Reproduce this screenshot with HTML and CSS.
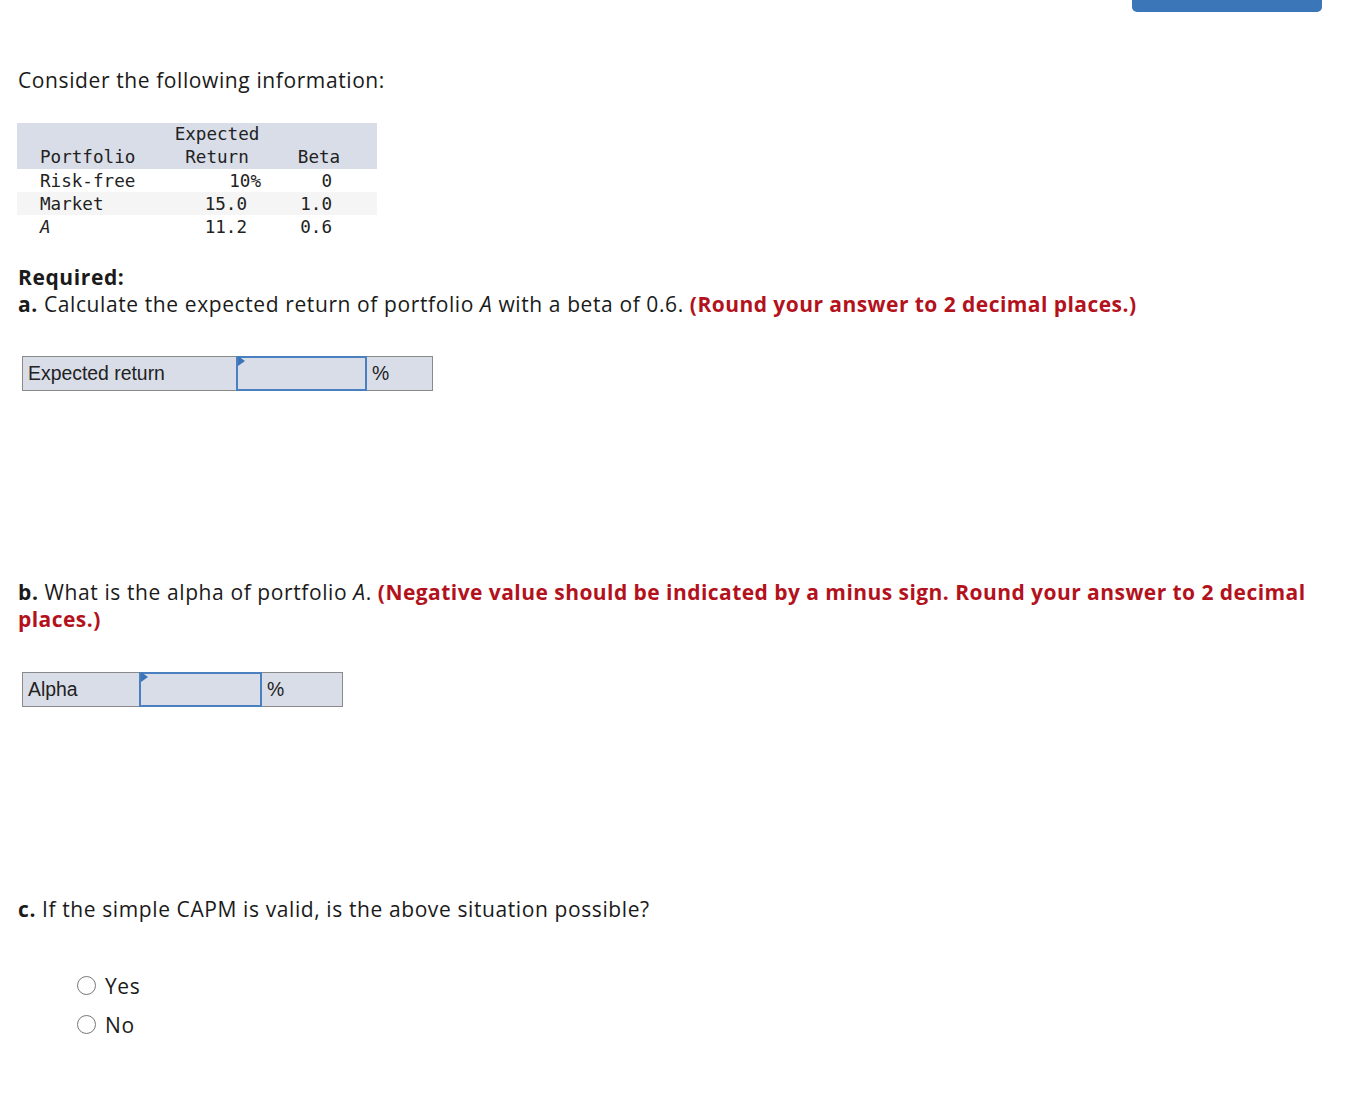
FILE: index.html
```html
<!DOCTYPE html>
<html>
<head>
<meta charset="utf-8">
<link rel="stylesheet" href="styles.css">
</head>
<body>
<div class="topbar"><div class="topbtn"></div></div>
<main class="content">
  <p class="intro">Consider the following information:</p>
  <table class="data">
    <thead>
      <tr>
        <th class="c1"><br>Portfolio</th>
        <th class="c2">Expected<br>Return</th>
        <th class="c3"><br>Beta</th>
      </tr>
    </thead>
    <tbody>
      <tr><td class="c1">Risk-free</td><td class="c2 pct">10%</td><td class="c3">0</td></tr>
      <tr class="alt"><td class="c1">Market</td><td class="c2">15.0</td><td class="c3">1.0</td></tr>
      <tr><td class="c1"><i>A</i></td><td class="c2">11.2</td><td class="c3">0.6</td></tr>
    </tbody>
  </table>

  <p class="req"><b>Required:</b><br><b>a.</b> Calculate the expected return of portfolio <i>A</i> with a beta of 0.6. <span class="red">(Round your answer to 2 decimal places.)</span></p>

  <div class="answer">
    <div class="lab lab-a">Expected return</div>
    <div class="inp inp-a"></div>
    <div class="unit unit-a">%</div>
  </div>

  <p class="qb"><b>b.</b> What is the alpha of portfolio <i>A</i>. <span class="red">(Negative value should be indicated by a minus sign. Round your answer to 2 decimal places.)</span></p>

  <div class="answer answer-b">
    <div class="lab lab-b">Alpha</div>
    <div class="inp inp-b"></div>
    <div class="unit unit-b">%</div>
  </div>

  <p class="qc"><b>c.</b> If the simple CAPM is valid, is the above situation possible?</p>

  <ul class="radios">
    <li><span class="radio"></span>Yes</li>
    <li><span class="radio"></span>No</li>
  </ul>
</main>
</body>
</html>
```
FILE: styles.css
```css
html, body {
  margin: 0;
  padding: 0;
  background: #fff;
}
body {
  font-family: "Open Sans", Lato, sans-serif;
  color: #1a1a1a;
  font-size: 21px;
  letter-spacing: 0.6px;
}
.topbar {
  height: 12px;
  display: flex;
  justify-content: flex-end;
  padding-right: 40px;
}
.topbtn {
  width: 190px;
  height: 12px;
  background: #3a76b8;
  border-radius: 0 0 5px 5px;
}
.content {
  padding: 0 40px 0 18px;
}
p {
  margin: 0;
  line-height: 27px;
}
.intro {
  margin-top: 55px;
}
.data {
  margin-top: 29px;
  margin-left: -1px;
  border-collapse: collapse;
  font-family: "DejaVu Sans Mono", "Liberation Mono", monospace;
  font-size: 17.6px;
  letter-spacing: 0;
  color: #222;
}
.data th, .data td {
  padding: 0;
  height: 23px;
  line-height: 23px;
  font-weight: normal;
  white-space: nowrap;
  vertical-align: bottom;
}
.data tbody td {
  padding-top: 1px;
  height: 22px;
  line-height: 22px;
}
.data thead tr {
  background: #d9dde8;
}
.data tr.alt {
  background: #f5f5f5;
}
.data .c1 {
  width: 120px;
  padding-left: 23px;
  text-align: left;
}
.data .c2 {
  width: 87px;
  padding-right: 27px;
  text-align: right;
}
.data th.c2 {
  text-align: center;
  padding-right: 0;
  width: 114px;
}
.data td.pct {
  padding-right: 13px;
}
.data .c3 {
  width: 58px;
  padding-right: 45px;
  text-align: right;
}
.data th.c3 {
  text-align: center;
  padding-right: 13px;
  width: 90px;
}
.req {
  margin-top: 26px;
}
.red {
  color: #b3121c;
  font-weight: bold;
  letter-spacing: 0.45px;
}
.answer {
  display: flex;
  margin-top: 38px;
  margin-left: 4px;
  height: 35px;
  font-family: "Liberation Sans", Arial, sans-serif;
  font-size: 19.4px;
  letter-spacing: 0;
  color: #222;
}
.answer-b {
  margin-top: 39px;
}
.lab, .unit {
  box-sizing: border-box;
  background: #d9dde8;
  border: 1px solid #8a8a8a;
  padding: 0 5px;
  line-height: 33px;
}
.lab { border-right: none; }
.unit { border-left: none; }
.inp {
  box-sizing: border-box;
  position: relative;
  background: #d9dde8;
  border: 2px solid #4a7fc0;
}
.inp::before {
  content: "";
  position: absolute;
  left: 0;
  top: 0;
  border-left: 7px solid #3c74b8;
  border-top: 5px solid transparent;
  border-bottom: 5px solid transparent;
  margin-top: -2px;
}
.lab-a { width: 214px; }
.inp-a { width: 131px; }
.unit-a { width: 66px; }
.lab-b { width: 117px; }
.inp-b { width: 123px; }
.unit-b { width: 81px; }
.qb {
  margin-top: 188px;
}
.qc {
  margin-top: 189px;
}
.radios {
  list-style: none;
  margin: 43px 0 0 59px;
  padding: 0;
}
.radios li {
  display: flex;
  align-items: center;
  height: 39px;
}
.radio {
  display: inline-block;
  box-sizing: border-box;
  width: 19px;
  height: 19px;
  border: 1.5px solid #777;
  border-radius: 50%;
  margin-right: 9px;
}
```
